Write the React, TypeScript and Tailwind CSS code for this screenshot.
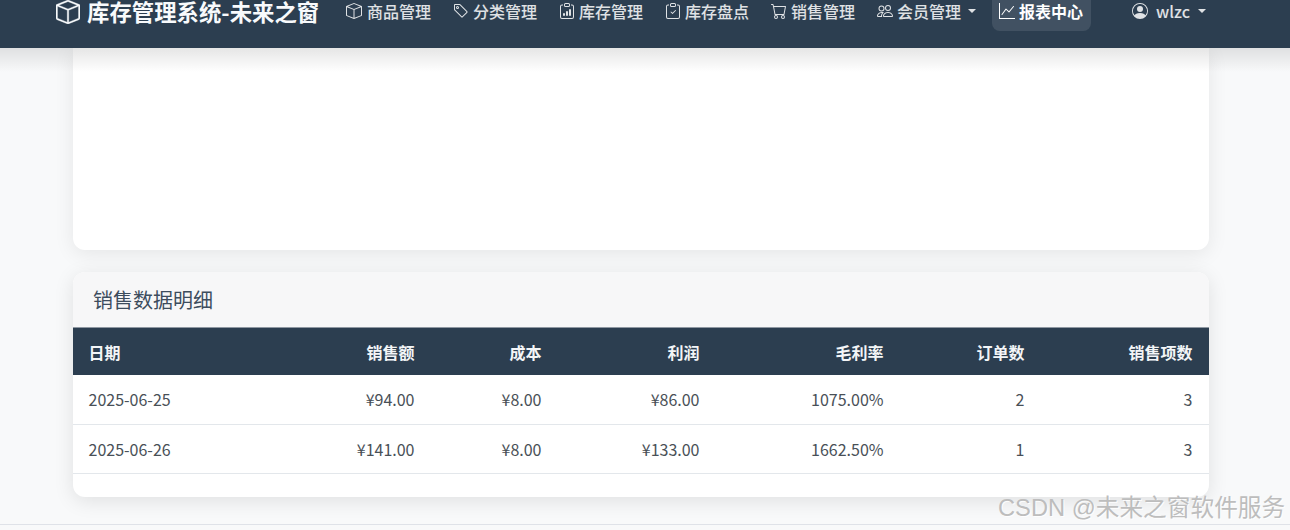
import React from 'react';
import {
  BsBox,
  BsTag,
  BsClipboardData,
  BsClipboardCheck,
  BsCart,
  BsPeople,
  BsGraphUp,
  BsPersonCircle,
} from 'react-icons/bs';

const navItems = [
  { label: '商品管理', icon: BsBox },
  { label: '分类管理', icon: BsTag },
  { label: '库存管理', icon: BsClipboardData },
  { label: '库存盘点', icon: BsClipboardCheck },
  { label: '销售管理', icon: BsCart },
];

const rows = [
  ['2025-06-25', '¥94.00', '¥8.00', '¥86.00', '1075.00%', '2', '3'],
  ['2025-06-26', '¥141.00', '¥8.00', '¥133.00', '1662.50%', '1', '3'],
];

const headers = ['日期', '销售额', '成本', '利润', '毛利率', '订单数', '销售项数'];
const colWidths = ['w-[231px]', 'w-[127px]', 'w-[127px]', 'w-[158px]', 'w-[184px]', 'w-[141px]', 'w-[168px]'];

const Caret = () => (
  <span className="inline-block w-0 h-0 border-x-[4px] border-x-transparent border-t-[4px] border-t-current" />
);

const App: React.FC = () => {
  return (
    <div className="relative h-[530px] overflow-hidden bg-[#f8f9fa] font-['Noto_Sans_CJK_SC','Noto_Sans',sans-serif] text-[#495057]">
      <nav className="relative z-10 h-12 overflow-hidden bg-[#2c3e50]">
        <div className="flex items-center h-10 -mt-[9px] pl-[56px]">
          <div className="flex items-center gap-[7px] w-[290px] pt-[1px] text-[#f8fafc] text-[22.4px] font-bold leading-none">
            <BsBox className="w-6 h-6 stroke-[0.2]" />
            <span className="whitespace-nowrap">库存管理系统-未来之窗</span>
          </div>
          {navItems.map((item, i) => (
            <div key={item.label} className={`flex items-center gap-[4px] text-[16px] font-medium text-white/85 whitespace-nowrap ${i === 0 ? 'w-[107px] gap-[5px]' : 'w-[106px]'}`}>
              <item.icon className="w-4 h-4" />
              <span>{item.label}</span>
            </div>
          ))}
          <div className="flex items-center gap-[4px] w-[115px] text-[16px] font-medium text-white/85 whitespace-nowrap">
            <BsPeople className="w-4 h-4" />
            <span>会员管理</span>
            <span className="ml-[3px] flex"><Caret /></span>
          </div>
          <div className="flex items-center gap-[4px] h-10 w-[99px] pl-[7px] rounded-lg bg-white/10 text-[16px] font-bold text-white whitespace-nowrap">
            <BsGraphUp className="w-4 h-4" />
            <span>报表中心</span>
          </div>
          <div className="flex items-center ml-[41px] text-[16px] font-medium text-white/85">
            <BsPersonCircle className="w-4 h-4" />
            <span className="ml-[8px]">wlzc</span>
            <span className="ml-[8px] flex"><Caret /></span>
          </div>
        </div>
      </nav>

      <main className="mx-[73px] w-[1136px]">
        <div className="h-[202px] bg-white rounded-b-xl shadow-[0_4px_20px_rgba(0,0,0,0.08)]" />

        <section className="mt-[22px] bg-white rounded-xl shadow-[0_4px_20px_rgba(0,0,0,0.1)] overflow-hidden pb-[23px]">
          <h5 className="h-[56px] flex items-center px-5 bg-[#f7f7f8] text-[20px] font-normal text-[#3d4d5e] border-b border-[#8f98a2]">
            销售数据明细
          </h5>
          <table className="w-full table-fixed border-collapse text-[16px]">
            <colgroup>
              {colWidths.map((w, i) => (
                <col key={i} className={w} />
              ))}
            </colgroup>
            <thead>
              <tr className="h-[47px] bg-[#2c3e50] text-[#f3f5f7]">
                {headers.map((h, i) => (
                  <th key={h} className={`font-bold ${i === 0 ? 'pl-[15.5px] text-left' : 'pr-[16.5px] text-right'}`}>
                    {h}
                  </th>
                ))}
              </tr>
            </thead>
            <tbody>
              {rows.map((row) => (
                <tr key={row[0]} className="h-[49px] border-b border-[#e3e7eb]">
                  {row.map((cell, i) => (
                    <td key={i} className={i === 0 ? 'pl-[15.5px] text-left' : 'pr-[16.5px] text-right'}>
                      {cell}
                    </td>
                  ))}
                </tr>
              ))}
            </tbody>
          </table>
        </section>
      </main>

      {/* nav shadow falls over the first card */}
      <div className="absolute left-0 right-0 top-12 h-6 bg-gradient-to-b from-black/10 to-transparent" />

      <div className="absolute left-0 right-0 top-[524px] border-t border-[#dfe2e8]" />

      <div className="absolute left-[998px] top-[492px] text-[23.7px] leading-[32px] text-[#bdbdbd] whitespace-nowrap font-['Liberation_Sans','Noto_Sans_CJK_SC',sans-serif] [text-shadow:1px_1px_0_rgba(255,255,255,0.9)]">
        CSDN @未来之窗软件服务
      </div>
    </div>
  );
};

export default App;
